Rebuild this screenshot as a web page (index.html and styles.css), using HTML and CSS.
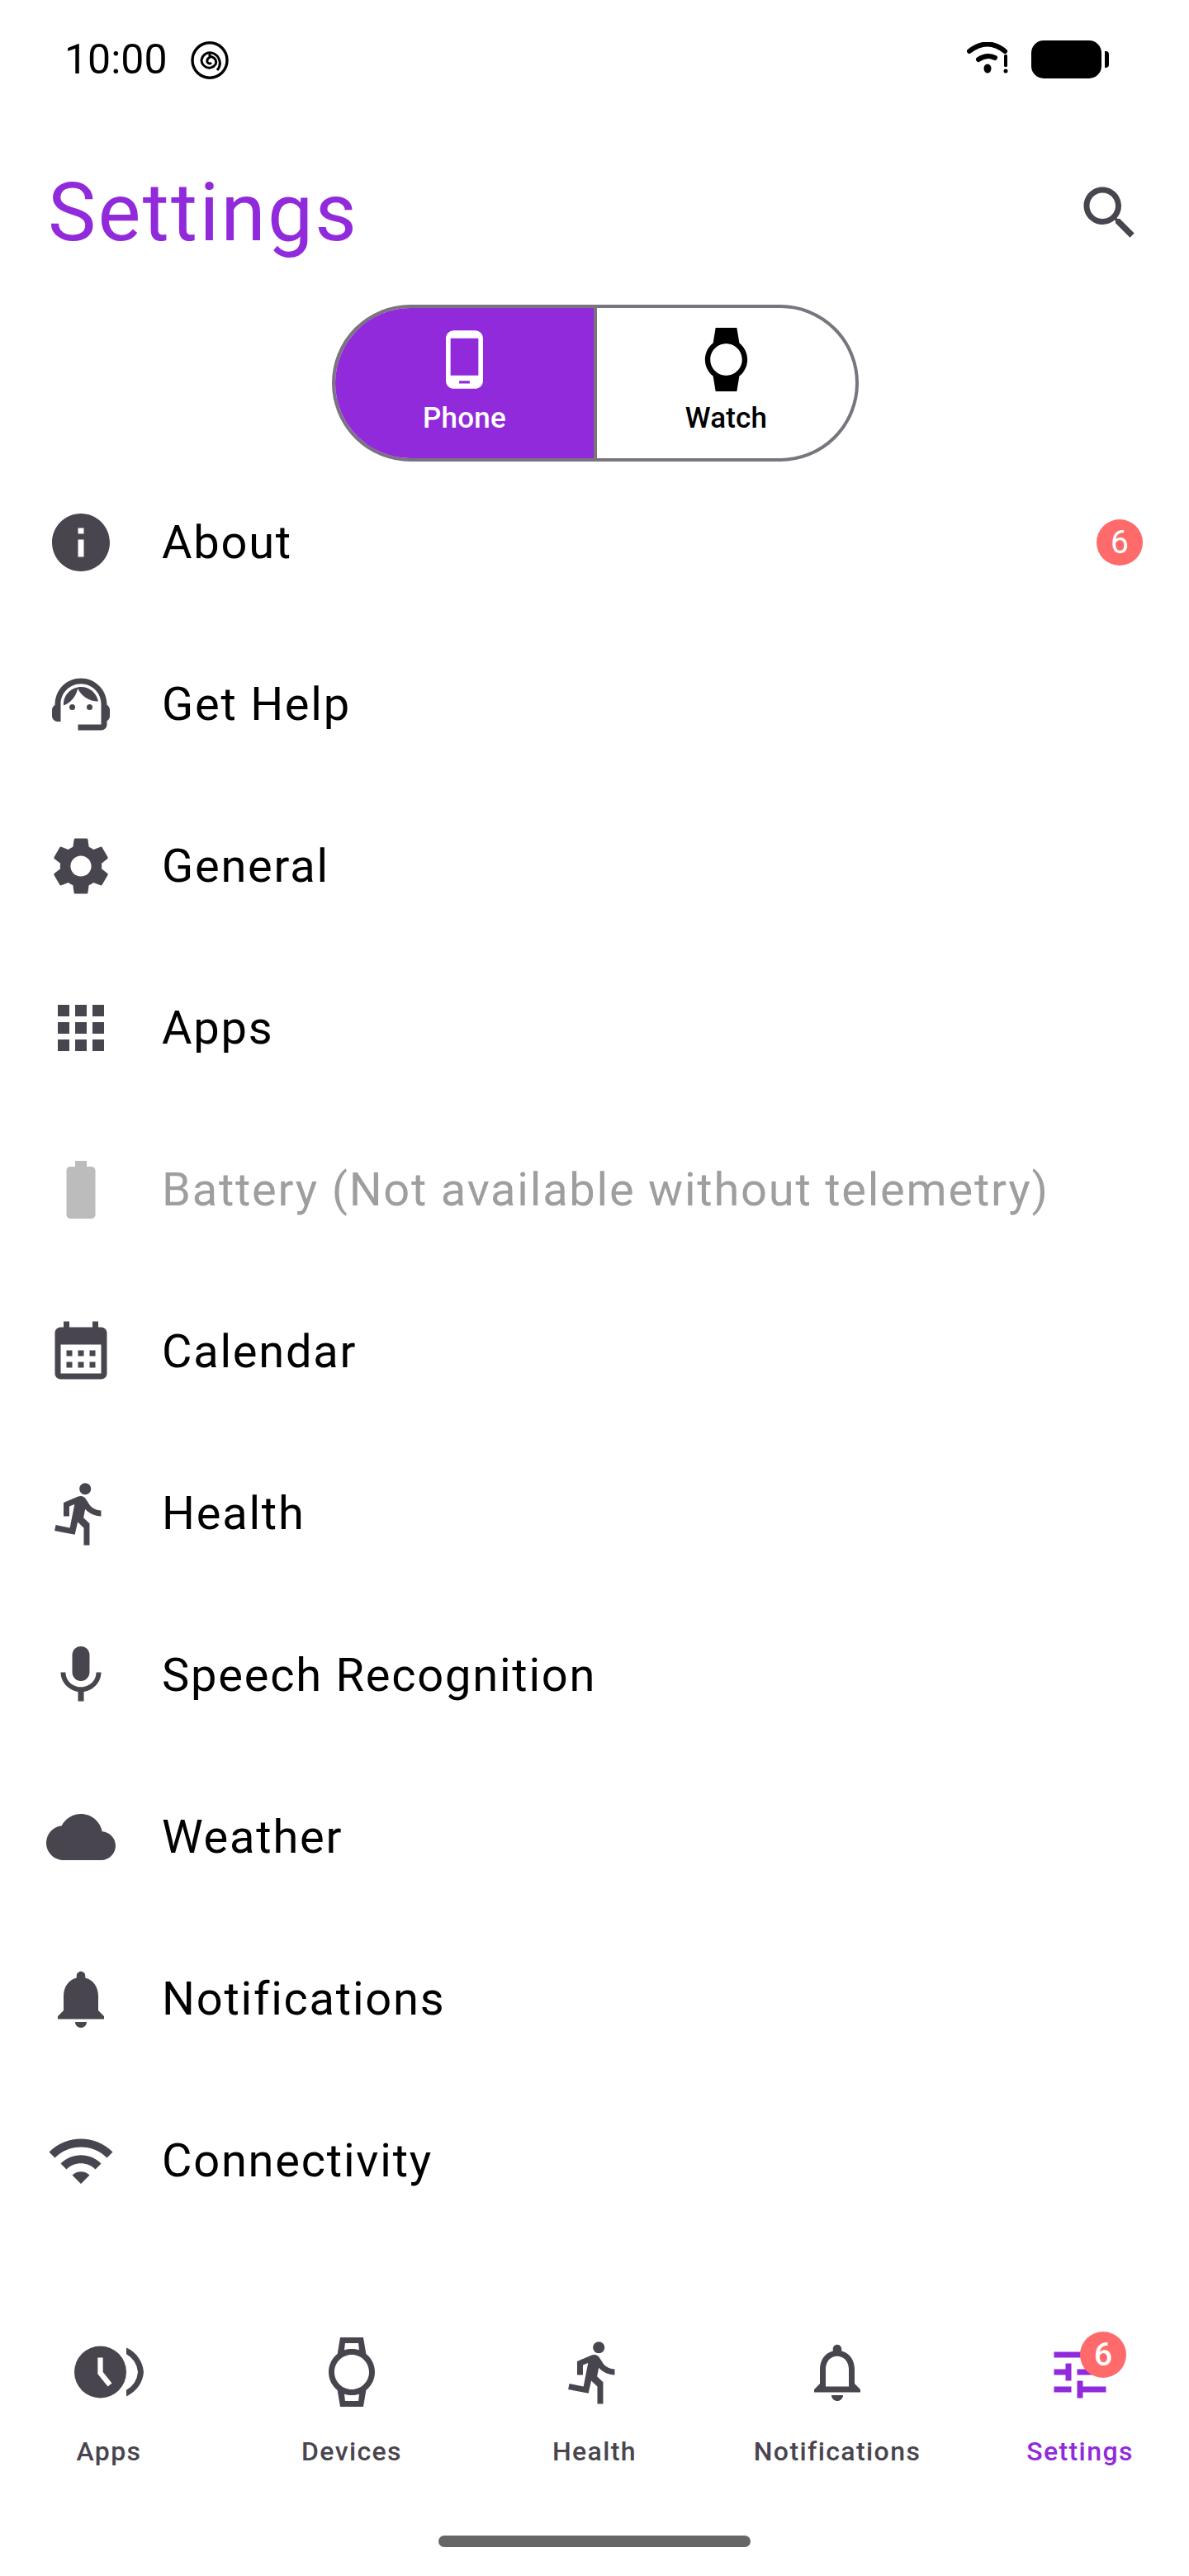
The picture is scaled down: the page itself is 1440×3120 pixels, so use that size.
FILE: index.html
```html
<!DOCTYPE html>
<html lang="en">
<head>
<meta charset="utf-8">
<title>Settings</title>
<link rel="stylesheet" href="styles.css">
</head>
<body>
<div class="screen">
  <div class="status">
    <span class="time">10:00</span>
    <svg class="spiral" viewBox="0 0 46 46" fill="none" stroke="#000" stroke-width="3"><ellipse cx="23" cy="23" rx="21" ry="21.2" stroke-width="3.4"/><path d="M25 26a3 3 0 0 1-5-3 5 5 0 0 1 6-4 6.5 6.5 0 0 1 4 9 9 9 0 0 1-12 3 10 10 0 0 1-5-8 11 11 0 0 1 8-9 12 12 0 0 1 13 7 13 13 0 0 1-2 14M23 13v5"/></svg>
    <span class="status-gap"></span>
    <svg class="st-wifi" viewBox="0 0 50 38" fill="#000"><path d="M3 11Q25-6 46 11" fill="none" stroke="#000" stroke-width="6" stroke-linecap="round"/><path d="M14 21Q24 14 34 19" fill="none" stroke="#000" stroke-width="6" stroke-linecap="round"/><ellipse cx="25" cy="32" rx="4.5" ry="5.5"/><rect x="45" y="15" width="4" height="15" rx="1.5"/><circle cx="47" cy="35" r="2.5"/></svg>
    <span class="st-batt"></span>
    <span class="st-nub"></span>
  </div>

  <header class="top">
    <h1 class="title">Settings</h1>
    <svg class="icon" viewBox="0 0 24 24"><path d="M15.5 14h-.79l-.28-.27C15.41 12.59 16 11.11 16 9.5 16 5.91 13.09 3 9.5 3S3 5.91 3 9.5 5.91 16 9.5 16c1.61 0 3.09-.59 4.23-1.57l.27.28v.79l5 4.99L20.49 19l-4.99-5zm-6 0C7.01 14 5 11.99 5 9.5S7.01 5 9.5 5 14 7.01 14 9.5 11.99 14 9.5 14z"/></svg>
  </header>

  <div class="toggle">
    <div class="seg seg-on">
      <svg class="seg-icon" viewBox="0 0 24 24"><path d="M16 1H8C6.34 1 5 2.34 5 4v16c0 1.66 1.34 3 3 3h8c1.66 0 3-1.34 3-3V4c0-1.66-1.34-3-3-3zm-2 20h-4v-1h4v1zm3.25-3H6.75V4h10.5v14z"/></svg>
      <span>Phone</span>
    </div>
    <div class="seg">
      <svg class="seg-icon" viewBox="0 0 24 24"><path fill-rule="evenodd" d="M20 12c0-2.54-1.19-4.81-3.04-6.27L16 0H8l-.95 5.73C5.19 7.19 4 9.45 4 12s1.19 4.81 3.05 6.27L8 24h8l.96-5.73C18.81 16.81 20 14.54 20 12zM6 12c0-3.31 2.69-6 6-6s6 2.69 6 6-2.69 6-6 6-6-2.69-6-6z"/></svg>
      <span>Watch</span>
    </div>
  </div>

  <ul class="list">
    <li class="row">
      <svg class="icon" viewBox="0 0 24 24"><path d="M12 2C6.48 2 2 6.48 2 12s4.48 10 10 10 10-4.48 10-10S17.52 2 12 2zm1 15h-2v-6h2v6zm0-8h-2V7h2v2z"/></svg>
      <span class="label">About</span>
      <span class="badge">6</span>
    </li>
    <li class="row">
      <svg class="icon" viewBox="0 0 24 24"><path d="M21 12.22C21 6.73 16.74 3 12 3c-4.69 0-9 3.65-9 9.28-.6.34-1 .98-1 1.72v2c0 1.1.9 2 2 2h1v-6.1c0-3.87 3.13-7 7-7s7 3.13 7 7V19h-8v2h8c1.1 0 2-.9 2-2v-1.22c.59-.31 1-.92 1-1.62v-2.3c0-.67-.41-1.28-1-1.64z"/><circle cx="9" cy="13" r="1"/><circle cx="15" cy="13" r="1"/><path d="M18 11.03C17.52 8.18 15.04 6 12.05 6c-3.03 0-6.29 2.51-6.03 6.45 2.47-1.01 4.33-3.21 4.86-5.89 1.31 2.63 4 4.44 7.12 4.47z"/></svg>
      <span class="label">Get Help</span>
    </li>
    <li class="row">
      <svg class="icon" viewBox="0 0 24 24"><path d="M19.14 12.94c.04-.3.06-.61.06-.94 0-.32-.02-.64-.07-.94l2.03-1.58c.18-.14.23-.41.12-.61l-1.92-3.32c-.12-.22-.37-.29-.59-.22l-2.39.96c-.5-.38-1.03-.7-1.62-.94l-.36-2.54c-.04-.24-.24-.41-.48-.41h-3.84c-.24 0-.43.17-.47.41l-.36 2.54c-.59.24-1.13.57-1.62.94l-2.39-.96c-.22-.08-.47 0-.59.22L2.74 8.87c-.12.21-.08.47.12.61l2.03 1.58c-.05.3-.09.63-.09.94s.02.64.07.94l-2.03 1.58c-.18.14-.23.41-.12.61l1.92 3.32c.12.22.37.29.59.22l2.39-.96c.5.38 1.03.7 1.62.94l.36 2.54c.05.24.24.41.48.41h3.84c.24 0 .44-.17.47-.41l.36-2.54c.59-.24 1.13-.56 1.62-.94l2.39.96c.22.08.47 0 .59-.22l1.92-3.32c.12-.22.07-.47-.12-.61l-2.01-1.58zM12 15.6c-1.98 0-3.6-1.62-3.6-3.6s1.62-3.6 3.6-3.6 3.6 1.62 3.6 3.6-1.62 3.6-3.6 3.6z"/></svg>
      <span class="label">General</span>
    </li>
    <li class="row">
      <svg class="icon" viewBox="0 0 24 24"><path d="M4 8h4V4H4v4zm6 12h4v-4h-4v4zm-6 0h4v-4H4v4zm0-6h4v-4H4v4zm6 0h4v-4h-4v4zm6-10v4h4V4h-4zm-6 4h4V4h-4v4zm6 6h4v-4h-4v4zm0 6h4v-4h-4v4z"/></svg>
      <span class="label">Apps</span>
    </li>
    <li class="row row-off">
      <svg class="icon" viewBox="0 0 24 24"><path d="M15.67 4H14V2h-4v2H8.33C7.6 4 7 4.6 7 5.33v15.33C7 21.4 7.6 22 8.33 22h7.33c.74 0 1.34-.6 1.34-1.33V5.33C17 4.6 16.4 4 15.67 4z"/></svg>
      <span class="label">Battery (Not available without telemetry)</span>
    </li>
    <li class="row">
      <svg class="icon cal" viewBox="0 0 24 24"><path fill-rule="evenodd" d="M6 1h2v2h8V1h2v2h1c1.1 0 2 .9 2 2v14c0 1.1-.9 2-2 2H5c-1.1 0-2-.9-2-2V5c0-1.1.9-2 2-2h1zM5 9v10h14V9zM7 11h2v2H7zm4 0h2v2h-2zm4 0h2v2h-2zM7 15h2v2H7zm4 0h2v2h-2zm4 0h2v2h-2z"/></svg>
      <span class="label">Calendar</span>
    </li>
    <li class="row">
      <svg class="icon" viewBox="0 0 24 24"><path d="M13.49 5.48c1.1 0 2-.9 2-2s-.9-2-2-2-2 .9-2 2 .9 2 2 2zm-3.6 13.9l1-4.4 2.1 2v6h2v-7.5l-2.1-2 .6-3c1.3 1.5 3.3 2.5 5.5 2.5v-2c-1.9 0-3.5-1-4.3-2.4l-1-1.6c-.4-.6-1-1-1.7-1-.3 0-.5.1-.8.1l-5.2 2.2v4.7h2v-3.4l1.8-.7-1.6 8.1-4.9-1-.4 2 7 1.4z"/></svg>
      <span class="label">Health</span>
    </li>
    <li class="row">
      <svg class="icon" viewBox="0 0 24 24"><path d="M12 14c1.66 0 2.99-1.34 2.99-3L15 5c0-1.66-1.34-3-3-3S9 3.34 9 5v6c0 1.66 1.34 3 3 3zm5.3-3c0 3-2.54 5.1-5.3 5.1S6.7 14 6.7 11H5c0 3.41 2.72 6.23 6 6.72V21h2v-3.28c3.28-.48 6-3.3 6-6.72h-1.7z"/></svg>
      <span class="label">Speech Recognition</span>
    </li>
    <li class="row">
      <svg class="icon" viewBox="0 0 24 24"><path d="M19.35 10.04C18.67 6.59 15.64 4 12 4 9.11 4 6.6 5.64 5.35 8.04 2.34 8.36 0 10.91 0 14c0 3.31 2.69 6 6 6h13c2.76 0 5-2.24 5-5 0-2.64-2.05-4.78-4.65-4.96z"/></svg>
      <span class="label">Weather</span>
    </li>
    <li class="row">
      <svg class="icon" viewBox="0 0 24 24"><path d="M12 22c1.1 0 2-.9 2-2h-4c0 1.1.89 2 2 2zm6-6v-5c0-3.07-1.64-5.64-4.5-6.32V4c0-.83-.67-1.5-1.5-1.5s-1.5.67-1.5 1.5v.68C7.63 5.36 6 7.92 6 11v5l-2 2v1h16v-1l-2-2z"/></svg>
      <span class="label">Notifications</span>
    </li>
    <li class="row">
      <svg class="icon" viewBox="0 0 24 24"><path d="M1 9l2 2c4.97-4.97 13.03-4.97 18 0l2-2C16.93 2.93 7.08 2.93 1 9zm8 8l3 3 3-3c-1.65-1.66-4.34-1.66-6 0zm-4-4l2 2c2.76-2.76 7.24-2.76 10 0l2-2C15.14 9.14 8.87 9.14 5 13z"/></svg>
      <span class="label">Connectivity</span>
    </li>
  </ul>

  <nav class="nav">
    <div class="tab">
      <svg class="icon" viewBox="0 0 24 24"><circle cx="9" cy="12" r="9"/><path d="M9 7v5.3l3.3 4.1" fill="none" stroke="#fff" stroke-width="1.8"/><path d="M18 3.6A10 10 0 0 1 24 12 10 10 0 0 1 18 20.4V18.2A8 8 0 0 0 22 12 8 8 0 0 0 18 5.8z"/></svg>
      <span>Apps</span>
    </div>
    <div class="tab">
      <svg class="icon" viewBox="0 0 24 24"><path fill-rule="evenodd" d="M20 12c0-2.54-1.19-4.81-3.04-6.27L16 0H8l-.95 5.73C5.19 7.19 4 9.45 4 12s1.19 4.81 3.05 6.27L8 24h8l.96-5.73C18.81 16.81 20 14.54 20 12zM6 12c0-3.31 2.69-6 6-6s6 2.69 6 6-2.69 6-6 6-6-2.69-6-6zM9.7 2h4.6l.27 2.35C13.8 4.12 12.9 4 12 4s-1.8.12-2.57.35zM9.43 19.65C10.2 19.88 11.1 20 12 20s1.8-.12 2.57-.35L14.3 22H9.7z"/></svg>
      <span>Devices</span>
    </div>
    <div class="tab">
      <svg class="icon" viewBox="0 0 24 24"><path d="M13.49 5.48c1.1 0 2-.9 2-2s-.9-2-2-2-2 .9-2 2 .9 2 2 2zm-3.6 13.9l1-4.4 2.1 2v6h2v-7.5l-2.1-2 .6-3c1.3 1.5 3.3 2.5 5.5 2.5v-2c-1.9 0-3.5-1-4.3-2.4l-1-1.6c-.4-.6-1-1-1.7-1-.3 0-.5.1-.8.1l-5.2 2.2v4.7h2v-3.4l1.8-.7-1.6 8.1-4.9-1-.4 2 7 1.4z"/></svg>
      <span>Health</span>
    </div>
    <div class="tab">
      <svg class="icon" viewBox="0 0 24 24"><path d="M12 22c1.1 0 2-.9 2-2h-4c0 1.1.9 2 2 2zm6-6v-5c0-3.07-1.63-5.64-4.5-6.32V4c0-.83-.67-1.5-1.5-1.5s-1.5.67-1.5 1.5v.68C7.64 5.36 6 7.92 6 11v5l-2 2v1h16v-1l-2-2zm-2 1H8v-6c0-2.48 1.51-4.5 4-4.5s4 2.02 4 4.5v6z"/></svg>
      <span>Notifications</span>
    </div>
    <div class="tab tab-on">
      <div class="tab-icon">
        <svg class="icon" viewBox="0 0 24 24"><path d="M3 17v2h6v-2H3zM3 5v2h10V5H3zm10 16v-2h8v-2h-8v-2h-2v6h2zM7 9v2H3v2h4v2h2V9H7zm14 4v-2H11v2h10zm-6-4h2V7h4V5h-4V3h-2v6z"/></svg>
        <span class="badge badge-over">6</span>
      </div>
      <span>Settings</span>
    </div>
  </nav>

  <div class="handle"></div>
</div>
</body>
</html>
```

FILE: styles.css
```css
* { box-sizing: border-box; }

html, body {
  margin: 0;
  padding: 0;
  background: #fff;
}

.screen {
  width: 1440px;
  height: 3120px;
  display: flex;
  flex-direction: column;
  font-family: Roboto, "Noto Sans", sans-serif;
  color: #000;
}

/* Status bar */
.status {
  height: 146px;
  padding: 49px 97px 0 78px;
  display: flex;
  align-items: flex-start;
}

.time {
  font-size: 50px;
  line-height: 46px;
  width: 153px;
}

.spiral {
  width: 46px;
  height: 46px;
  margin-top: 1px;
}

.status-gap { flex: 1; }

.st-wifi {
  width: 50px;
  height: 38px;
  margin-top: 2px;
  margin-right: 28px;
}

.st-batt {
  width: 85px;
  height: 46px;
  border-radius: 15px;
  background: #000;
}

.st-nub {
  width: 5px;
  height: 20px;
  margin: 13px 0 0 4px;
  border-radius: 0 4px 4px 0;
  background: #000;
}

/* Title row */
.top {
  height: 223px;
  padding: 0 54px 0 58px;
  display: flex;
  align-items: center;
  justify-content: space-between;
}

.title {
  margin: 0;
  font-size: 98px;
  font-weight: 400;
  line-height: 115px;
  letter-spacing: 2.3px;
  color: #912adb;
}

.icon {
  width: 84px;
  height: 84px;
  flex: none;
  fill: #49454f;
}

/* Phone / Watch switch */
.toggle {
  width: 638px;
  height: 190px;
  margin: 0 auto;
  position: relative;
  left: 1px;
  display: flex;
  border: 4px solid #79747e;
  border-radius: 95px;
  overflow: hidden;
}

.seg {
  flex: 1;
  display: flex;
  flex-direction: column;
  align-items: center;
  padding-top: 24px;
  font-size: 35px;
  font-weight: 500;
  line-height: 41px;
  letter-spacing: .2px;
}

.seg + .seg { border-left: 4px solid #79747e; }

.seg-on {
  background: #912adb;
  color: #fff;
}

.seg-icon {
  width: 77px;
  height: 77px;
  fill: currentColor;
  margin-bottom: 12px;
}

/* Settings list */
.list {
  list-style: none;
  margin: 0;
  padding: 0;
}

.row {
  height: 196px;
  padding: 0 56px;
  display: flex;
  align-items: center;
  font-size: 56px;
  letter-spacing: 1.77px;
}

.label {
  flex: 1;
  margin-left: 56px;
}

.row-off .icon { fill: #bcbcbc; }
.row-off .label { color: #9e9e9e; }

.cal { position: relative; top: 2px; }

.badge {
  width: 56px;
  height: 56px;
  border-radius: 50%;
  background: #ff6b6b;
  color: #fff;
  font-size: 39px;
  letter-spacing: 0;
  line-height: 56px;
  text-align: center;
}

/* Bottom navigation */
.nav {
  margin-top: auto;
  display: flex;
  justify-content: space-between;
}

.tab {
  width: 264px;
  display: flex;
  flex-direction: column;
  align-items: center;
  gap: 35px;
  font-size: 32px;
  font-weight: 500;
  line-height: 38px;
  letter-spacing: 1.4px;
  color: #49454f;
}

.tab-on { color: #912adb; }
.tab-on .icon { fill: #912adb; }

.tab-icon {
  position: relative;
  height: 84px;
}

.badge-over {
  position: absolute;
  top: -7px;
  left: 42px;
}

.handle {
  width: 378px;
  height: 14px;
  margin: 83px auto 35px;
  border-radius: 7px;
  background: #666;
}
```
